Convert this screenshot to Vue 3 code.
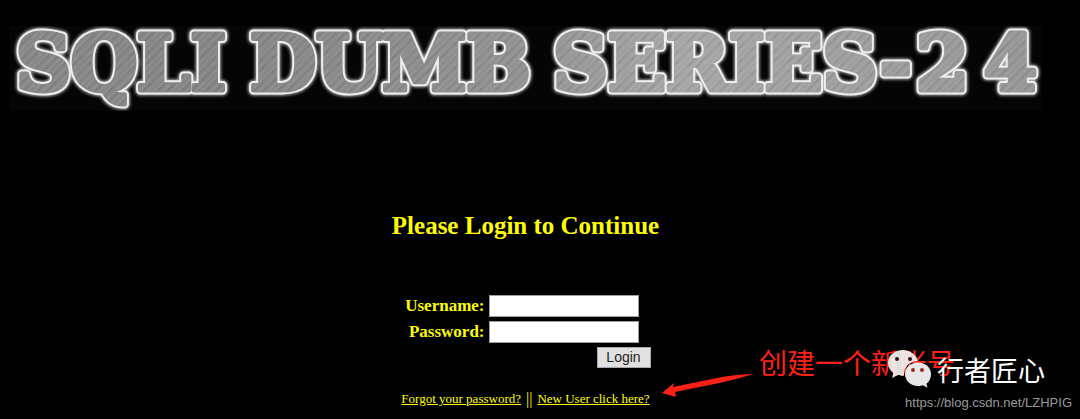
<script setup>
import { ref } from 'vue'

const username = ref('')
const password = ref('')
const words = [
  { text: 'SQLI', x: 7 },
  { text: 'DUMB', x: 241 },
  { text: 'SERIES-', x: 544 },
  { text: '2', x: 907 },
  { text: '4', x: 975 },
]
</script>

<template>
  <main class="page">
    <svg class="banner" viewBox="0 0 1033 85" role="img" aria-label="SQLI DUMB SERIES-24">
      <defs>
        <linearGradient id="steel" x1="0" y1="0" x2="1033" y2="0" gradientUnits="userSpaceOnUse">
          <stop offset="0" stop-color="#888" />
          <stop offset="0.2" stop-color="#858585" />
          <stop offset="0.5" stop-color="#929292" />
          <stop offset="0.65" stop-color="#a6a6a6" />
          <stop offset="1" stop-color="#969696" />
        </linearGradient>
        <pattern id="brushed" width="17" height="17" patternUnits="userSpaceOnUse" patternTransform="rotate(45)">
          <path d="M2 0V17M8 0V17M13 0V17" stroke="#fff" stroke-opacity="0.08" />
          <path d="M5 0V17M15 0V17" stroke="#000" stroke-opacity="0.08" />
        </pattern>
        <filter id="glow" x="-5%" y="-20%" width="110%" height="140%">
          <feGaussianBlur stdDeviation="1.5" />
        </filter>
        <g id="title">
          <text v-for="word in words" :key="word.text" :x="word.x" y="64">{{ word.text }}</text>
        </g>
      </defs>
      <rect width="1033" height="85" fill="#050505" />
      <use href="#title" class="halo" filter="url(#glow)" />
      <use href="#title" class="edge" />
      <use href="#title" class="metal" />
      <use href="#title" class="grain" />
    </svg>

    <h1 class="heading">Please Login to Continue</h1>

    <form class="login" @submit.prevent>
      <label for="username">Username:</label>
      <input id="username" v-model="username" type="text" />
      <label for="password">Password:</label>
      <input id="password" v-model="password" type="password" />
      <button type="submit">Login</button>
    </form>

    <nav class="links">
      <a href="#forgot">Forgot your password?</a>
      <span>||</span>
      <a href="#new">New User click here?</a>
    </nav>

    <svg class="arrow" width="94" height="28" viewBox="0 0 94 28" aria-hidden="true">
      <path d="M0 21L12 11L11 15L60 5Q76 2 92 2Q78 6 62 10L13 20L14 25Z" fill="#ff2115" />
    </svg>
    <p class="note">创建一个新账号</p>

    <div class="brand">
      <svg width="44" height="38" viewBox="0 0 44 38" aria-hidden="true">
        <path d="M15 0C6.500 0 0 5.500 0 13c0 4 2 7.500 5.500 10L4 28l6-3c2 .6 3.500 .8 6 .8C15 18 21 11 30 11C28.500 5 22.500 0 15 0Z" fill="#fff" fill-opacity=".88" />
        <path d="M30 12.500c-7.500 0-13 5-13 11.500s5.500 12 13 12c2 0 3.500-.3 5-.8l4.500 2.500-1-4c3-2.300 4.500-5.700 4.500-9.700C43 17.500 37.500 12.500 30 12.500Z" fill="#e7e7e7" />
        <g fill="#35110f"><circle cx="9" cy="9" r="2" /><circle cx="22" cy="9" r="2" /></g>
        <g fill="#9a2a24"><circle cx="25" cy="20" r="2" /><circle cx="34" cy="20" r="2" /></g>
      </svg>
      <span>行者匠心</span>
    </div>
    <p class="source">https://blog.csdn.net/LZHPIG</p>
  </main>
</template>

<style>
body {
  background: #000;
}
</style>

<style scoped>
.page {
  position: relative;
  box-sizing: border-box;
  min-height: 100vh;
  padding: 26px 38px 10px 9px;
  overflow: hidden;
  background: #000;
  color: #ff0;
  font-family: "Liberation Serif", "Times New Roman", serif;
}

.banner {
  display: block;
  width: 100%;
  font-family: "DejaVu Serif", serif;
  font-size: 76px;
  font-weight: bold;
}

.halo {
  fill: #aaa;
  stroke: #aaa;
  stroke-width: 11px;
}

.edge {
  fill: #eee;
  stroke: #eee;
  stroke-width: 9px;
}

.halo,
.edge,
.metal,
.grain {
  stroke-linejoin: round;
}

.metal {
  fill: url(#steel);
  stroke: url(#steel);
  stroke-width: 5px;
}

.grain {
  fill: url(#brushed);
  stroke: url(#brushed);
  stroke-width: 5px;
}

.heading {
  margin: 100px 0 0;
  font-size: 25px;
  line-height: 30px;
  text-align: center;
}

.login {
  display: grid;
  grid-template-columns: 84px 150px;
  align-items: center;
  gap: 4px;
  width: 250px;
  margin: 54px auto 0;
}

.login label {
  font-size: 17px;
  font-weight: bold;
  line-height: 22px;
  text-align: right;
}

.login input {
  box-sizing: border-box;
  width: 100%;
  height: 22px;
  padding: 1px 4px;
  border: 1px solid #a0a0a0;
  background: #fff;
}

.login button {
  grid-column: 1 / -1;
  justify-self: end;
  box-sizing: border-box;
  width: 54px;
  height: 21px;
  margin-right: -12px;
  padding: 0;
  border: 1px solid #a8a8a8;
  background: #e1e1e1;
  color: #222;
  font: 14px/19px "Liberation Sans", Arial, sans-serif;
}

.links {
  display: flex;
  justify-content: center;
  align-items: center;
  gap: 5px;
  margin-top: 23px;
  font-size: 13px;
  line-height: 16px;
}

.links span {
  font-size: 16px;
}

.links a {
  color: inherit;
}

.arrow {
  position: absolute;
  left: 662px;
  top: 372px;
}

.note {
  position: absolute;
  left: 759px;
  top: 343px;
  margin: 0;
  color: #ff2115;
  font: 400 28px/38px "Noto Sans CJK SC", sans-serif;
  white-space: nowrap;
}

.brand {
  position: absolute;
  top: 350px;
  right: 35px;
  display: flex;
  gap: 5px;
  color: #fff;
  font: 27px/40px "Noto Sans CJK SC", sans-serif;
  white-space: nowrap;
}

.source {
  position: absolute;
  right: 8px;
  top: 395px;
  margin: 0;
  color: #999;
  font: 13px/16px "Liberation Sans", Arial, sans-serif;
}
</style>
